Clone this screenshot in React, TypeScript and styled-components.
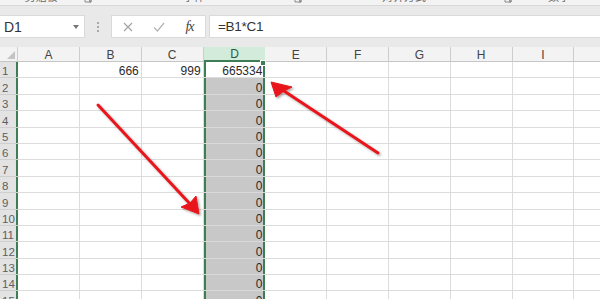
import React from "react";
import styled, { createGlobalStyle, css } from "styled-components";

const GREEN = "#3f7d55";

const Global = createGlobalStyle`
  html, body { margin: 0; padding: 0; background: #fff; }
  body { font-family: "Liberation Sans", Arial, sans-serif; }
`;

const Root = styled.div`
  position: relative;
  width: 600px;
  height: 299px;
  overflow: hidden;
  background: #fff;
  display: flex;
  flex-direction: column;
`;

/* ---------- ribbon remnant ---------- */
const RibbonStrip = styled.div`
  flex: none;
  height: 5px;
  display: flex;
  overflow: hidden;
  background: #f3f3f3;
  border-bottom: 1px solid #d8d8d8;
`;

const RibbonGroup = styled.div<{ $w: number }>`
  flex: none;
  width: ${(p) => p.$w}px;
  display: flex;
  align-items: flex-start;
`;

const GroupLabel = styled.span`
  flex: 1;
  text-align: center;
  margin-top: -10px;
  height: 13px;
  line-height: 13px;
  font-size: 11px;
  color: #6a6a6a;
  font-family: "Noto Sans CJK SC", "Noto Sans", sans-serif;
  white-space: nowrap;
`;

const Launcher = styled.svg`
  flex: none;
  width: 14px;
  height: 8px;
  margin-top: -5px;
`;

/* ---------- formula bar ---------- */
const FormulaBar = styled.div`
  flex: none;
  height: 41px;
  box-sizing: border-box;
  padding: 9px 0;
  background: #e9e9e9;
  display: flex;
  align-items: stretch;
`;

const NameBox = styled.div`
  flex: none;
  width: 85px;
  box-sizing: border-box;
  background: #fff;
  border: 1px solid #dadada;
  border-left: none;
  display: flex;
  align-items: center;
  justify-content: space-between;
  padding: 0 5px 0 4px;
  font-size: 14px;
  color: #333;
`;

const Caret = styled.span`
  width: 0;
  height: 0;
  border-left: 3.5px solid transparent;
  border-right: 3.5px solid transparent;
  border-top: 4px solid #777;
`;

const Grip = styled.div`
  flex: none;
  width: 26px;
  display: flex;
  flex-direction: column;
  align-items: center;
  justify-content: center;
  gap: 2px;
`;

const GripDot = styled.span`
  width: 2px;
  height: 2px;
  background: #a8a8a8;
`;

const ActionBox = styled.div`
  flex: none;
  width: 95px;
  box-sizing: border-box;
  background: #fff;
  border: 1px solid #dadada;
  display: flex;
`;

const ActionSlot = styled.div`
  flex: 1;
  display: flex;
  align-items: center;
  justify-content: center;
`;

const Fx = styled.span`
  font-family: "Liberation Serif", "DejaVu Serif", serif;
  font-style: italic;
  font-size: 14px;
  color: #444;
  letter-spacing: -1px;
`;

const FormulaInput = styled.div`
  flex: 1;
  margin-left: 3px;
  background: #fff;
  border: 1px solid #dadada;
  border-right: none;
  display: flex;
  align-items: center;
  padding-left: 8px;
  font-size: 13.5px;
  color: #333;
  letter-spacing: -0.3px;
`;

/* ---------- sheet ---------- */
const Sheet = styled.div`
  flex: none;
  display: grid;
  grid-template-columns: 18px 62px repeat(9, 61.8px);
  grid-template-rows: 15px repeat(15, 16.4px);
`;

const Corner = styled.div`
  box-sizing: border-box;
  background: #f3f3f3;
  border-right: 1px solid #cfcfcf;
  border-bottom: 1px solid #c6c6c6;
  display: flex;
  align-items: flex-end;
  justify-content: flex-end;
  padding: 0 2px 2px 0;
`;

const CornerTri = styled.span`
  width: 0;
  height: 0;
  border-left: 8px solid transparent;
  border-bottom: 8px solid #c4c4c4;
`;

const ColHeader = styled.div<{ $selected?: boolean }>`
  box-sizing: border-box;
  background: #f3f3f3;
  border-right: 1px solid #cdcdcd;
  border-bottom: 1px solid #c6c6c6;
  display: flex;
  align-items: flex-end;
  justify-content: center;
  font-size: 12px;
  line-height: 12px;
  color: #444;
  ${(p) =>
    p.$selected &&
    css`
      background: #d3ebdb;
      color: #2c5a3d;
      border-right: none;
      border-bottom: 2px solid ${GREEN};
    `}
`;

const RowHeader = styled.div`
  box-sizing: border-box;
  background: #e3e3e3;
  border-bottom: 1px solid #cfcfcf;
  box-shadow: inset -2px 0 0 ${GREEN};
  display: flex;
  align-items: flex-end;
  padding-left: 2px;
  font-size: 11.5px;
  line-height: 12px;
  color: #5e5e5e;
`;

const Cell = styled.div<{ $selected?: boolean; $active?: boolean }>`
  position: relative;
  box-sizing: border-box;
  border-right: 1px solid #dcdcdc;
  border-bottom: 1px solid #dcdcdc;
  display: flex;
  align-items: flex-end;
  justify-content: flex-end;
  padding-right: 2px;
  font-size: 12px;
  line-height: 12px;
  color: #2a2a2a;
  ${(p) =>
    (p.$selected || p.$active) &&
    css`
      border-right: none;
      padding-right: 3px;
      box-shadow: inset 2px 0 0 ${GREEN}, inset -2px 0 0 ${GREEN};
    `}
  ${(p) =>
    p.$selected &&
    css`
      background: #c8c8c8;
      border-bottom-color: #d9d9d9;
    `}
`;

const Handle = styled.span`
  position: absolute;
  top: -2px;
  right: -1px;
  width: 4px;
  height: 4px;
  background: ${GREEN};
  border: 1px solid #fff;
`;

const Overlay = styled.svg`
  position: absolute;
  left: 0;
  top: 0;
  pointer-events: none;
`;

const groups = [
  { w: 96, label: "剪贴板" },
  { w: 210, label: "字体" },
  { w: 210, label: "对齐方式" },
  { w: 100, label: "数字" },
];

const cols = ["A", "B", "C", "D", "E", "F", "G", "H", "I", "J"];
const SEL = 3;
const firstRow: Record<number, string> = { 1: "666", 2: "999", 3: "665334" };

export default function App() {
  const rows = Array.from({ length: 15 }, (_, i) => i + 1);
  return (
    <Root>
      <Global />
      <RibbonStrip>
        {groups.map((g) => (
          <RibbonGroup key={g.label} $w={g.w}>
            <GroupLabel>{g.label}</GroupLabel>
            <Launcher viewBox="0 0 14 8">
              <path d="M3 1h6v6H3z" fill="none" stroke="#8a8a8a" strokeWidth="1" />
              <path d="M6 4l3 3M9 5v2H7" fill="none" stroke="#8a8a8a" strokeWidth="1" />
            </Launcher>
          </RibbonGroup>
        ))}
      </RibbonStrip>

      <FormulaBar>
        <NameBox>
          <span>D1</span>
          <Caret />
        </NameBox>
        <Grip>
          <GripDot />
          <GripDot />
          <GripDot />
        </Grip>
        <ActionBox>
          <ActionSlot>
            <svg width="10" height="10" viewBox="0 0 10 10">
              <path d="M1 1l8 8M9 1l-8 8" stroke="#a3a3a3" strokeWidth="1.2" />
            </svg>
          </ActionSlot>
          <ActionSlot>
            <svg width="12" height="10" viewBox="0 0 12 10">
              <path d="M1 5.5l3.5 3.5L11 1" fill="none" stroke="#b3b3b3" strokeWidth="1.2" />
            </svg>
          </ActionSlot>
          <ActionSlot>
            <Fx>fx</Fx>
          </ActionSlot>
        </ActionBox>
        <FormulaInput>=B1*C1</FormulaInput>
      </FormulaBar>

      <Sheet>
        <Corner>
          <CornerTri />
        </Corner>
        {cols.map((c, i) => (
          <ColHeader key={c} $selected={i === SEL}>
            {c}
          </ColHeader>
        ))}
        {rows.map((r) => (
          <React.Fragment key={r}>
            <RowHeader>{r}</RowHeader>
            {cols.map((c, i) => {
              const isSel = i === SEL;
              const active = isSel && r === 1;
              let text = "";
              if (r === 1 && firstRow[i]) text = firstRow[i];
              if (isSel && r > 1) text = "0";
              return (
                <Cell key={c} $selected={isSel && !active} $active={active}>
                  {text}
                  {active && <Handle />}
                </Cell>
              );
            })}
          </React.Fragment>
        ))}
      </Sheet>

      <Overlay width="600" height="299" viewBox="0 0 600 299">
        <defs>
          <filter id="sh" x="-20%" y="-20%" width="140%" height="140%">
            <feDropShadow dx="1.5" dy="1.5" stdDeviation="1.2" floodColor="#000" floodOpacity="0.35" />
          </filter>
        </defs>
        <g filter="url(#sh)" fill="#e8191c" stroke="#e8191c">
          <line x1="98" y1="105" x2="191" y2="205" strokeWidth="3" strokeLinecap="round" />
          <polygon points="199,214 181,207 190,203 196,196" strokeWidth="1" strokeLinejoin="round" />
          <line x1="378" y1="153" x2="281" y2="89" strokeWidth="3" strokeLinecap="round" />
          <polygon points="271,82 292,87 284,91 276,97" strokeWidth="1" strokeLinejoin="round" />
        </g>
      </Overlay>
    </Root>
  );
}
